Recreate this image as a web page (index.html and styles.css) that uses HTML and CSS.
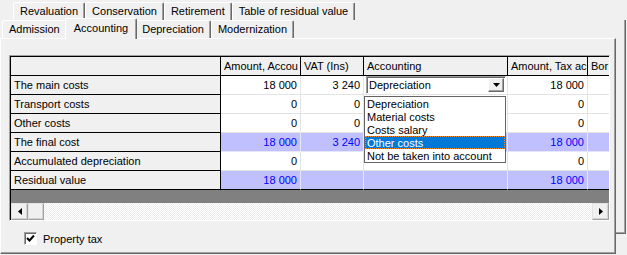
FILE: index.html
```html
<!DOCTYPE html>
<html lang="en">

<head>
    <meta charset="UTF-8">
    <meta name="viewport" content="width=device-width, initial-scale=1.0">
    <title>Accounting</title>
    <link rel="stylesheet" href="styles.css">
</head>

<body>
    <div class="tabs tabs-back">
        <div class="tab">Revaluation</div>
        <div class="tab">Conservation</div>
        <div class="tab">Retirement</div>
        <div class="tab">Table of residual value</div>
    </div>

    <div class="stack">
        <div class="tabs tabs-front">
            <div class="tab">Admission</div>
            <div class="tab active">Accounting</div>
            <div class="tab">Depreciation</div>
            <div class="tab">Modernization</div>
        </div>

        <div class="panel">
            <div class="grid">
                <div class="grid-inner">
                    <div class="grid-view">
                        <table class="sheet">
                            <tr class="head">
                                <th class="c1"></th>
                                <th class="c2">Amount, Accou</th>
                                <th class="c3">VAT (Ins)</th>
                                <th class="c4">Accounting</th>
                                <th class="c5">Amount, Tax ac</th>
                                <th class="c6">Bor</th>
                            </tr>
                            <tr>
                                <th>The main costs</th>
                                <td>18 000</td>
                                <td>3 240</td>
                                <td class="combo-cell">
                                    <div class="combo">
                                        <span class="combo-text">Depreciation</span>
                                        <span class="combo-btn">
                                            <svg width="7" height="4" viewBox="0 0 7 4"><polygon points="0,0 7,0 3.5,4" fill="#000"/></svg>
                                        </span>
                                        <ul class="list">
                                            <li>Depreciation</li>
                                            <li>Material costs</li>
                                            <li>Costs salary</li>
                                            <li class="selected">Other costs</li>
                                            <li>Not be taken into account</li>
                                        </ul>
                                    </div>
                                </td>
                                <td>18 000</td>
                                <td></td>
                            </tr>
                            <tr>
                                <th>Transport costs</th>
                                <td>0</td>
                                <td>0</td>
                                <td></td>
                                <td>0</td>
                                <td></td>
                            </tr>
                            <tr>
                                <th>Other costs</th>
                                <td>0</td>
                                <td>0</td>
                                <td></td>
                                <td>0</td>
                                <td></td>
                            </tr>
                            <tr class="total">
                                <th>The final cost</th>
                                <td>18 000</td>
                                <td>3 240</td>
                                <td></td>
                                <td>18 000</td>
                                <td></td>
                            </tr>
                            <tr>
                                <th>Accumulated depreciation</th>
                                <td>0</td>
                                <td></td>
                                <td></td>
                                <td>0</td>
                                <td></td>
                            </tr>
                            <tr class="total last">
                                <th>Residual value</th>
                                <td>18 000</td>
                                <td></td>
                                <td></td>
                                <td>18 000</td>
                                <td></td>
                            </tr>
                        </table>
                    </div>

                    <div class="hscroll">
                        <div class="sb-btn">
                            <svg width="4" height="7" viewBox="0 0 4 7"><polygon points="4,0 4,7 0,3.5" fill="#000"/></svg>
                        </div>
                        <div class="sb-thumb"></div>
                        <div class="sb-track"></div>
                        <div class="sb-btn">
                            <svg width="4" height="7" viewBox="0 0 4 7"><polygon points="0,0 4,3.5 0,7" fill="#000"/></svg>
                        </div>
                    </div>
                </div>
            </div>

            <label class="check">
                <span class="check-box">
                    <svg width="9" height="9" viewBox="0 0 9 9"><polyline points="1,4 3.5,6.5 8,1.5" fill="none" stroke="#000" stroke-width="2"/></svg>
                </span>
                Property tax
            </label>
        </div>
    </div>
</body>

</html>
```

FILE: styles.css
```css
/* Global Reset */
* {
    box-sizing: border-box;
    margin: 0;
    padding: 0;
}

body {
    font-family: "Liberation Sans", Arial, sans-serif;
    font-size: 11px;
    color: #000;
    background-color: #f0f0f0;
    width: 627px;
    height: 255px;
    overflow: hidden;
}

/* Tabs */
.tabs {
    display: flex;
    align-items: flex-end;
    height: 20px;
}

.tabs-back {
    padding-left: 13px;
}

.tabs-front {
    height: 18px;
    padding-left: 2px;
}

.tab {
    height: 18px;
    line-height: 17px;
    padding: 0 6px;
    white-space: nowrap;
    background-color: #f0f0f0;
    border-top: 1px solid #fff;
    border-left: 1px solid #fff;
    border-right: 1px solid #696969;
    border-radius: 2px 2px 0 0;
    box-shadow: inset -1px 0 #a0a0a0;
}

.tab.active {
    position: relative;
    z-index: 1;
    height: 21px;
    line-height: 19px;
    margin: -2px -2px -1px;
    padding: 0 8px;
}

/* Pages */
.stack {
    width: 626px;
    height: 214px;
    border-right: 1px solid #696969;
    border-bottom: 1px solid #696969;
    box-shadow: inset -1px -1px #a0a0a0;
}

.panel {
    width: 616px;
    height: 216px;
    padding: 16px 0 0 8px;
    background-color: #f0f0f0;
    border-top: 1px solid #fff;
    border-left: 1px solid #fff;
    border-right: 1px solid #696969;
    border-bottom: 1px solid #696969;
    box-shadow: inset -1px -1px #a0a0a0;
}

/* Grid */
.grid {
    width: 601px;
    height: 166px;
    border: 1px solid;
    border-color: #a0a0a0 #fff #fff #a0a0a0;
}

.grid-inner {
    height: 164px;
    border-top: 1px solid #000;
    border-left: 1px solid #000;
}

.grid-view {
    height: 146px;
    overflow: hidden;
    background-color: #808080;
}

.sheet {
    width: 637px;
    table-layout: fixed;
    border-spacing: 0;
}

.sheet th,
.sheet td {
    height: 19px;
    line-height: 18px;
    padding: 0 3px;
    white-space: nowrap;
    overflow: hidden;
    font-weight: normal;
    vertical-align: top;
    text-align: right;
    background-color: #fff;
    border-right: 1px solid #e3e3e3;
    border-bottom: 1px solid #e3e3e3;
}

.sheet th {
    text-align: left;
    background-color: #f0f0f0;
    border-color: #000;
}

.c1 { width: 210px; }
.c2 { width: 80px; }
.c3 { width: 63px; }
.c4 { width: 144px; }
.c5 { width: 80px; }
.c6 { width: 60px; }

.total td {
    color: #0000ff;
    background-color: #c0c0ff;
    border-color: #e6e6ff;
}

.last td,
.last th {
    border-bottom-color: #000;
}

/* Drop-down in the Accounting cell */
.sheet td.combo-cell {
    padding: 0 0 0 2px;
    overflow: visible;
    text-align: left;
}

.combo {
    position: relative;
    display: flex;
    align-items: center;
    width: 140px;
    height: 18px;
    background-color: #fff;
    border: 1px solid;
    border-color: #a0a0a0 #fff #fff #a0a0a0;
    box-shadow: inset 1px 1px #696969;
}

.combo-text {
    padding-left: 2px;
    line-height: 16px;
}

.combo-btn {
    display: flex;
    align-items: center;
    justify-content: center;
    width: 16px;
    height: 14px;
    margin: 0 1px 0 auto;
    background-color: #f0f0f0;
    border: 1px solid;
    border-color: #fff #696969 #696969 #fff;
    box-shadow: inset -1px -1px #a0a0a0;
}

.list {
    position: absolute;
    left: -3px;
    top: 19px;
    width: 142px;
    list-style: none;
    background-color: #fff;
    border: 1px solid #646464;
    z-index: 2;
}

.list li {
    height: 13px;
    line-height: 14px;
    padding-left: 2px;
}

.list li.selected {
    color: #fff;
    background-color: #0078d7;
    border: 1px dotted #f08a24;
    padding-left: 1px;
    line-height: 12px;
}

/* Horizontal scrollbar */
.hscroll {
    display: flex;
    height: 17px;
}

.sb-btn,
.sb-thumb {
    width: 17px;
    height: 17px;
    display: flex;
    align-items: center;
    justify-content: center;
    background-color: #f0f0f0;
    border: 1px solid;
    border-color: #e3e3e3 #a0a0a0 #a0a0a0 #e3e3e3;
    box-shadow: inset -1px -1px #d4d4d4;
}

.sb-thumb {
    width: 16px;
}

.sb-track {
    flex: 1;
    background: repeating-conic-gradient(#fff 0 25%, #ececec 0 50%) 0 0 / 2px 2px;
}

/* Check box */
.check {
    display: flex;
    align-items: center;
    margin: 11px 0 0 15px;
}

.check-box {
    display: flex;
    align-items: center;
    justify-content: center;
    width: 13px;
    height: 13px;
    margin-right: 6px;
    background-color: #fff;
    border: 1px solid;
    border-color: #a0a0a0 #fff #fff #a0a0a0;
    box-shadow: inset 1px 1px #696969;
}
```
